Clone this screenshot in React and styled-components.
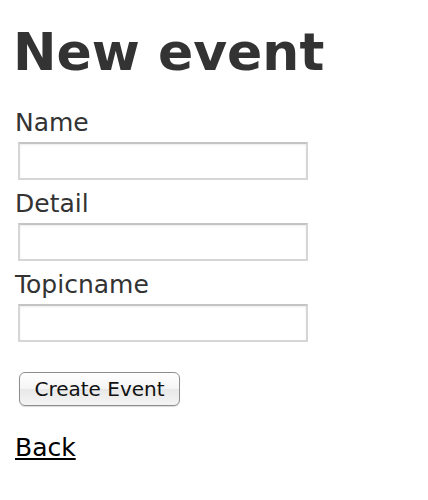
import React from "react";
import styled, { createGlobalStyle } from "styled-components";

const GlobalStyle = createGlobalStyle`
  body {
    margin: 0;
    background: #fff;
    font-family: "DejaVu Sans", Verdana, sans-serif;
    color: #333;
  }
`;

const Page = styled.div`
  padding: 22px 0 0 15px;
`;

const Title = styled.h1`
  margin: 0 0 26px -2px;
  font-size: 52px;
  font-weight: bold;
  line-height: 60px;
  color: #333;
`;

const Form = styled.form`
  display: flex;
  flex-direction: column;
`;

const Field = styled.div`
  display: flex;
  flex-direction: column;
  align-items: flex-start;
  margin-bottom: 9px;
`;

const Label = styled.label`
  font-size: 25px;
  line-height: 30px;
  color: #333;
`;

const Input = styled.input`
  box-sizing: border-box;
  width: 290px;
  height: 38px;
  margin: 4px 0 0 3px;
  border: 2px solid #d6d6d6;
  border-top-color: #c4c4c4;
  box-shadow: inset 0 1px 2px rgba(0, 0, 0, 0.08);
  background: #fff;
  font-size: 18px;
  outline: none;
`;

const Actions = styled.div`
  padding: 21px 0 0 4px;
`;

const Button = styled.button`
  width: 161px;
  height: 34px;
  padding: 0;
  border: 1px solid #8e8e8e;
  border-radius: 6px;
  background: linear-gradient(#ffffff 0%, #f4f4f4 50%, #e8e8e8 51%, #f4f4f4 100%);
  box-shadow: 0 1px 1px rgba(0, 0, 0, 0.15);
  font-family: "DejaVu Sans", Verdana, sans-serif;
  font-size: 20px;
  color: #111;
`;

const BackLink = styled.a`
  display: inline-block;
  margin-top: 27px;
  font-size: 25px;
  line-height: 30px;
  color: #000;
  text-decoration: underline;
`;

const fields = ["Name", "Detail", "Topicname"];

export default function App() {
  return (
    <Page>
      <GlobalStyle />
      <Title>New event</Title>
      <Form onSubmit={e => e.preventDefault()}>
        {fields.map(name => (
          <Field key={name}>
            <Label htmlFor={`event_${name.toLowerCase()}`}>{name}</Label>
            <Input id={`event_${name.toLowerCase()}`} type="text" />
          </Field>
        ))}
        <Actions>
          <Button type="submit">Create Event</Button>
        </Actions>
      </Form>
      <BackLink href="#">Back</BackLink>
    </Page>
  );
}
